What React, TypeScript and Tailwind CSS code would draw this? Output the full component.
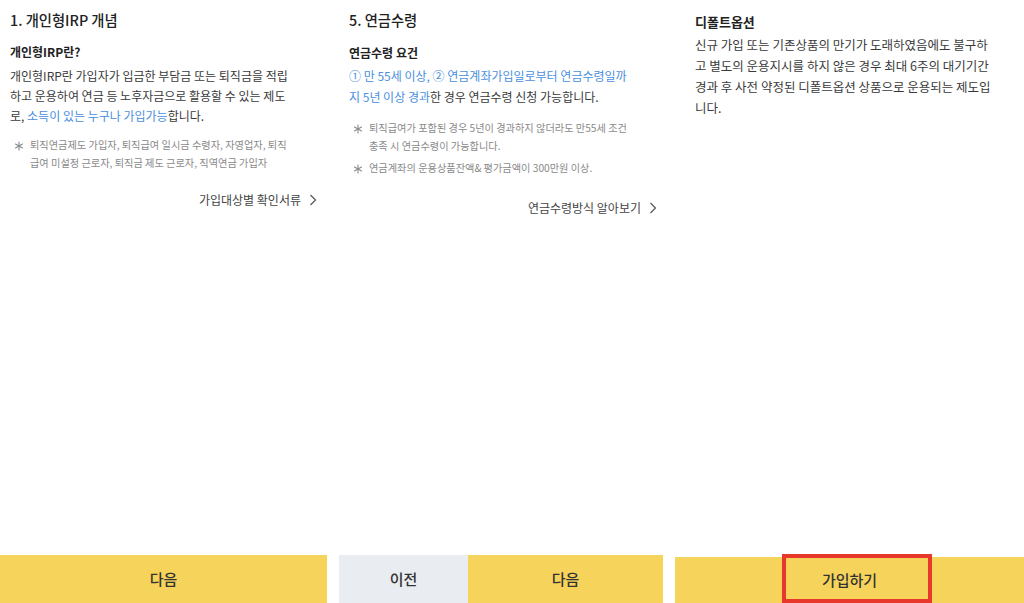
import React from "react";

const Chevron = () => (
  <svg width="8" height="12" viewBox="0 0 8 12" fill="none" className="ml-[8px]">
    <path d="M1.5 1 L6.5 6 L1.5 11" stroke="#555" strokeWidth="1.2" />
  </svg>
);

const Star = () => (
  <svg width="10" height="10" viewBox="0 0 10 10" className="mt-[5px] ml-[4px] mr-[6px] shrink-0">
    <g stroke="#8a8a8a" strokeWidth="1.1" strokeLinecap="round">
      <path d="M5 1 L5 9" />
      <path d="M1.5 3 L8.5 7" />
      <path d="M1.5 7 L8.5 3" />
    </g>
  </svg>
);

const Note = ({ children, className = "" }: { children: React.ReactNode; className?: string }) => (
  <div className={"flex items-start text-[10.2px] leading-[18px] text-[#8a8a8a] whitespace-nowrap " + className}>
    <Star />
    <span>{children}</span>
  </div>
);

export default function App() {
  return (
    <div className="flex w-[1024px] h-[603px] bg-white font-['Noto_Sans_CJK_KR','Noto_Sans',sans-serif] text-[#333] overflow-hidden">
      {/* Panel 1 */}
      <div className="w-[327px] flex flex-col justify-between shrink-0">
        <div className="pl-[10px] pr-[10px] pt-[10px]">
          <div className="text-[14.3px] leading-[20px] font-medium text-[#222]">1. 개인형IRP 개념</div>
          <div className="mt-[13px] text-[12px] leading-[18px] font-bold text-[#222]">개인형IRP란?</div>
          <div className="mt-[5px] text-[12px] leading-[20px] text-[#3a3a3a] whitespace-nowrap">
            개인형IRP란 가입자가 입금한 부담금 또는 퇴직금을 적립
            <br />
            하고 운용하여 연금 등 노후자금으로 활용할 수 있는 제도
            <br />
            로, <span className="text-[#4a8fe0]">소득이 있는 누구나 가입가능</span>합니다.
          </div>
          <div className="mt-[10px]">
            <Note>
              퇴직연금제도 가입자, 퇴직급여 일시금 수령자, 자영업자, 퇴직
              <br />
              급여 미설정 근로자, 퇴직금 제도 근로자, 직역연금 가입자
            </Note>
          </div>
          <div className="mt-[19px] flex justify-end items-center text-[12px] leading-[18px] text-[#444]">
            가입대상별 확인서류
            <Chevron />
          </div>
        </div>
        <button className="h-[48px] w-full bg-[#f6d35a] text-[15px] font-medium text-[#333]">다음</button>
      </div>

      <div className="w-[12px] shrink-0" />

      {/* Panel 2 */}
      <div className="w-[324px] flex flex-col justify-between shrink-0">
        <div className="pl-[10px] pr-[6px] pt-[10px]">
          <div className="text-[14.3px] leading-[20px] font-medium text-[#222]">5. 연금수령</div>
          <div className="mt-[14px] text-[12px] leading-[18px] font-bold text-[#222]">연금수령 요건</div>
          <div className="mt-[3px] text-[12px] leading-[21px] text-[#3a3a3a] whitespace-nowrap">
            <span className="text-[#4a8fe0]">① 만 55세 이상, ② 연금계좌가입일로부터 연금수령일까</span>
            <br />
            <span className="text-[#4a8fe0]">지 5년 이상 경과</span>한 경우 연금수령 신청 가능합니다.
          </div>
          <div className="mt-[12px]">
            <Note className="leading-[17px]">
              퇴직급여가 포함된 경우 5년이 경과하지 않더라도 만55세 조건
              <br />
              충족 시 연금수령이 가능합니다.
            </Note>
            <Note className="mt-[4px]">연금계좌의 운용상품잔액&amp; 평가금액이 300만원 이상.</Note>
          </div>
          <div className="mt-[22px] flex justify-end items-center text-[12px] leading-[18px] text-[#444]">
            연금수령방식 알아보기
            <Chevron />
          </div>
        </div>
        <div className="flex h-[48px]">
          <button className="w-[129px] bg-[#e9ecf0] text-[15px] font-medium text-[#333]">이전</button>
          <button className="flex-1 bg-[#f6d35a] text-[15px] font-medium text-[#333]">다음</button>
        </div>
      </div>

      <div className="w-[12px] shrink-0" />

      {/* Panel 3 */}
      <div className="flex-1 flex flex-col justify-between">
        <div className="pl-[20px] pt-[13px]">
          <div className="text-[13px] leading-[18px] font-bold text-[#222]">디폴트옵션</div>
          <div className="mt-[3px] text-[12.5px] leading-[21px] text-[#3a3a3a] whitespace-nowrap">
            신규 가입 또는 기존상품의 만기가 도래하였음에도 불구하
            <br />
            고 별도의 운용지시를 하지 않은 경우 최대 6주의 대기기간
            <br />
            경과 후 사전 약정된 디폴트옵션 상품으로 운용되는 제도입
            <br />
            니다.
          </div>
        </div>
        <div className="relative h-[46px] bg-[#f6d35a] flex items-center justify-center">
          <span className="text-[15px] font-medium text-[#333]">가입하기</span>
          <div className="absolute left-[107px] top-[-3px] w-[150px] h-[49px] border-[4px] border-[#e8372b]" />
        </div>
      </div>
    </div>
  );
}
